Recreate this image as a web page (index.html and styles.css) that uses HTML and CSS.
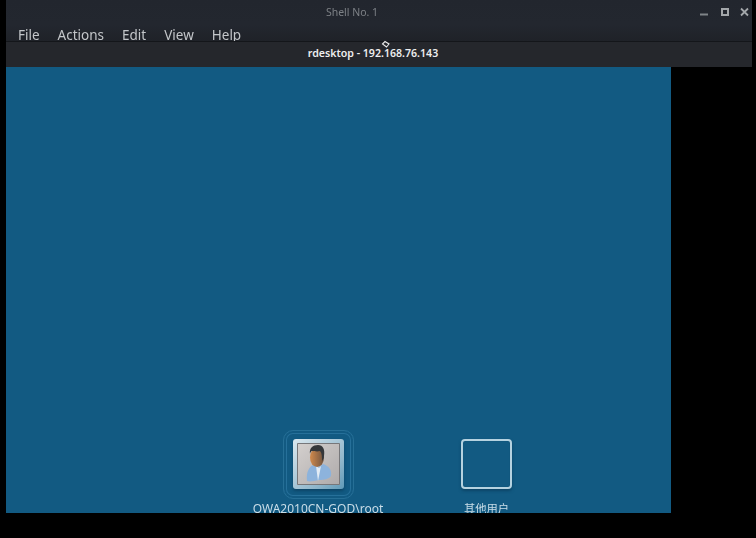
FILE: index.html
```html
<!DOCTYPE html>
<html lang="en">
<head>
  <meta charset="UTF-8" />
  <title>rdesktop - 192.168.76.143</title>
  <link rel="stylesheet" href="styles.css">
</head>
<body>
  <div class="window">
    <div class="shell-bar">
      <div class="title-row">
        <span class="shell-title">Shell No. 1</span>
        <div class="win-controls">
          <svg width="12" height="12" viewBox="0 0 12 12"><path d="M2 8.500h8" stroke="#7f8488" stroke-width="2"/></svg>
          <svg width="12" height="12" viewBox="0 0 12 12"><rect x="3" y="3" width="6" height="6" fill="none" stroke="#a3a7aa" stroke-width="2"/></svg>
          <svg width="12" height="12" viewBox="0 0 12 12"><path d="M2 2.500l7 7M9 2.500l-7 7" stroke="#a3a7aa" stroke-width="1.800"/></svg>
        </div>
      </div>
      <div class="menu-row">
        <span>File</span>
        <span>Actions</span>
        <span>Edit</span>
        <span>View</span>
        <span>Help</span>
      </div>
    </div>
    <div class="rdesktop-bar">rdesktop - 192.168.76.143</div>
  </div>

  <svg class="cursor" width="10" height="9" viewBox="0 0 10 9"><path d="M1.500 4l2.500-2.500 4 2.500-2.500 3z" fill="#26282d" stroke="#e8e8e8" stroke-width="1.100"/></svg>

  <div class="remote">
    <div class="tiles">
      <div class="tile tile-user">
        <div class="halo">
          <div class="frame">
            <div class="photo">
              <svg width="43" height="42" viewBox="0 0 43 42">
                <defs>
                  <linearGradient id="face" x1="0" x2="1" y1="0" y2="0">
                    <stop offset="0" stop-color="#d08a4c"/>
                    <stop offset="1" stop-color="#6f5340"/>
                  </linearGradient>
                </defs>
                <path d="M10 38c-1-9 2-15 8-17l4 3 4-3c6 2 9 6 8 12-2 3-7 4-12 4-5 1-9 2-12 1z" fill="#8db3dc"/>
                <path d="M19 23l2 15 3-15-2 2z" fill="#e3ecf5"/>
                <ellipse cx="20" cy="14.500" rx="7" ry="9.500" fill="url(#face)"/>
                <path d="M13 11c-1-6 3-9 8-9s7 4 6 11c0 2-1 4-2 5 0-4 0-8-2-10-3 1-6 0-8 0-1 0-2 2-2 3z" fill="#34373a"/>
              </svg>
            </div>
          </div>
        </div>
        <span class="tile-name">OWA2010CN-GOD\root</span>
      </div>
      <div class="tile tile-other">
        <div class="frame-empty"></div>
        <span class="tile-name tile-name-cjk">其他用户</span>
      </div>
    </div>
  </div>
</body>
</html>
```

FILE: styles.css
```css
html, body {
  margin: 0;
  height: 100%;
}

body {
  background: #000;
  overflow: hidden;
  font-family: "Noto Sans", "Noto Sans CJK SC", sans-serif;
}

.window {
  margin: 0 4px 0 6px;
  height: 67px;
  background: #24272d;
  display: flex;
  flex-direction: column;
}

.shell-bar {
  height: 41px;
  overflow: hidden;
  background: linear-gradient(#22262e, #23272f 60%, #1f2228);
  border-bottom: 1px solid #14161a;
}

.title-row {
  position: relative;
  height: 23px;
  padding-bottom: 6px;
  display: flex;
  align-items: center;
  justify-content: center;
}

.shell-title {
  font-size: 10.500px;
  color: #7d8186;
  margin-right: 54px;
  filter: blur(0.3px);
}

.win-controls {
  position: absolute;
  right: 1px;
  top: 6px;
  display: flex;
  gap: 8.500px;
}

.menu-row {
  display: flex;
  gap: 18px;
  padding-left: 12px;
  font-size: 13.500px;
  line-height: 12px;
  color: #c3c6c9;
  filter: blur(0.3px);
}

.rdesktop-bar {
  flex: 1;
  background: #25272c;
  color: #eeeeef;
  font-size: 10.600px;
  font-weight: 600;
  line-height: 22px;
  text-align: center;
  padding-right: 12px;
}

.cursor {
  position: absolute;
  left: 381px;
  top: 40px;
}

.remote {
  margin-left: 6px;
  width: 665px;
  height: 446px;
  overflow: hidden;
  background: #125a82;
}

.tiles {
  display: flex;
  padding: 363px 0 0 245px;
}

.tile {
  display: flex;
  flex-direction: column;
  align-items: center;
  color: #c9dde8;
  font-size: 12px;
}

.tile-user {
  width: 134px;
}

.tile-other {
  width: 51px;
  margin-left: 76px;
  padding-top: 9px;
}

.halo {
  width: 71px;
  height: 69px;
  box-sizing: border-box;
  padding-bottom: 1px;
  border: 1px solid #266f96;
  border-radius: 10px;
  display: flex;
  align-items: center;
  justify-content: center;
  box-shadow: inset 0 0 0 2px #125a82, inset 0 0 0 3px #26709a;
  filter: blur(0.4px);
}

.frame {
  width: 51px;
  height: 50px;
  box-sizing: border-box;
  padding: 4px;
  border-radius: 3px;
  background: linear-gradient(135deg, #dbe8ef, #8fb6cb 70%, #5f9ab8);
  box-shadow: 0 2px 3px #0d4566;
}

.photo {
  height: 100%;
  display: flex;
  align-items: flex-end;
  justify-content: center;
  overflow: hidden;
  border-radius: 1px;
  background: linear-gradient(135deg, #d4d0ce, #aeaaaa);
  box-shadow: inset 0 0 0 1px #77777a;
}

.frame-empty {
  width: 51px;
  height: 50px;
  box-sizing: border-box;
  border: 2px solid #b5d2e0;
  border-radius: 4px;
  box-shadow: 0 2px 3px #0d4566, inset 0 0 1px #0d4566;
  filter: blur(0.3px);
}

.tile-name {
  margin-top: 2px;
  white-space: nowrap;
  line-height: 16px;
  filter: blur(0.3px);
}

.tile-name-cjk {
  margin-top: 12px;
  font-size: 11.300px;
}
```
